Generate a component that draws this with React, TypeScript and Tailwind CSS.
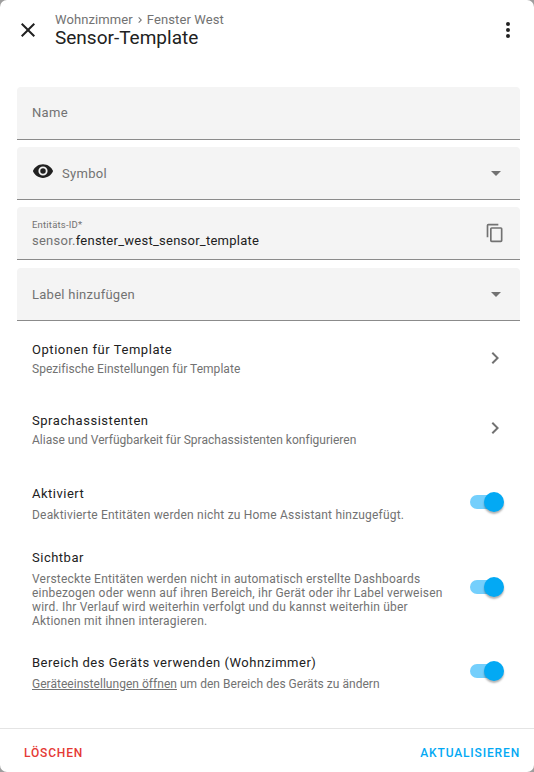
import React from 'react';

const Icon: React.FC<{ d: string; className?: string }> = ({ d, className }) => (
  <svg viewBox="0 0 24 24" className={className} fill="currentColor"><path d={d} /></svg>
);

const mdiClose = 'M19,6.41L17.59,5L12,10.59L6.41,5L5,6.41L10.59,12L5,17.59L6.41,19L12,13.41L17.59,19L19,17.59L13.41,12L19,6.41Z';
const mdiDots = 'M12,16A2,2 0 0,1 14,18A2,2 0 0,1 12,20A2,2 0 0,1 10,18A2,2 0 0,1 12,16M12,10A2,2 0 0,1 14,12A2,2 0 0,1 12,14A2,2 0 0,1 10,12A2,2 0 0,1 12,10M12,4A2,2 0 0,1 14,6A2,2 0 0,1 12,8A2,2 0 0,1 10,6A2,2 0 0,1 12,4Z';
const mdiEye = 'M12,9A3,3 0 0,0 9,12A3,3 0 0,0 12,15A3,3 0 0,0 15,12A3,3 0 0,0 12,9M12,17A5,5 0 0,1 7,12A5,5 0 0,1 12,7A5,5 0 0,1 17,12A5,5 0 0,1 12,17M12,4.5C7,4.5 2.73,7.61 1,12C2.73,16.39 7,19.5 12,19.5C17,19.5 21.27,16.39 23,12C21.27,7.61 17,4.5 12,4.5Z';
const mdiMenuDown = 'M7,10L12,15L17,10H7Z';
const mdiCopy = 'M19,21H8V7H19M19,5H8A2,2 0 0,0 6,7V21A2,2 0 0,0 8,23H19A2,2 0 0,0 21,21V7A2,2 0 0,0 19,5M16,1H4A2,2 0 0,0 2,3V17H4V3H16V1Z';
const mdiChevron = 'M8.59,16.58L13.17,12L8.59,7.41L10,6L16,12L10,18L8.59,16.58Z';

const Field: React.FC<{ className?: string; children: React.ReactNode }> = ({ className = '', children }) => (
  <div className={`h-[53px] flex items-center bg-[#f4f4f4] rounded-t border-b border-[#8b8b8b] ${className}`}>{children}</div>
);

const NavRow: React.FC<{ title: string; sub: string; className?: string; subClass?: string; chevronClass?: string }> = ({
  title,
  sub,
  className = '',
  subClass = '',
  chevronClass = '',
}) => (
  <div className={`flex items-center pl-[15px] pr-[13px] ${className}`}>
    <div className="flex-1">
      <div className="text-[13px] leading-5 tracking-[0.55px] text-[#212121]">{title}</div>
      <div className={`text-[12px] leading-[18px] text-[#727272] ${subClass}`}>{sub}</div>
    </div>
    <Icon d={mdiChevron} className={`w-6 h-6 text-[#727272] ${chevronClass}`} />
  </div>
);

const Toggle: React.FC<{ className?: string }> = ({ className = '' }) => (
  <div className={`relative w-[34px] h-[14px] shrink-0 ${className}`}>
    <div className="absolute left-0 right-0 top-0 bottom-0 rounded-full bg-[#74cffc] w-[30px]" />
    <div className="absolute right-0 top-[-3px] w-5 h-5 rounded-full bg-[#03a9f4] shadow-[0_2px_2px_rgba(0,0,0,0.3)]" />
  </div>
);

const ToggleRow: React.FC<{ title: string; className?: string; toggleClass?: string; descClass?: string; children: React.ReactNode }> = ({
  title,
  className = '',
  toggleClass = '',
  descClass = 'tracking-[0.2px]',
  children,
}) => (
  <div className={`flex items-center pl-[15px] pr-[16px] ${className}`}>
    <div className="flex-1 pr-6">
      <div className="text-[13px] leading-5 tracking-[0.5px] text-[#212121]">{title}</div>
      <div className={`text-[12px] leading-[14px] mt-[4px] text-[#727272] ${descClass}`}>{children}</div>
    </div>
    <Toggle className={toggleClass} />
  </div>
);

export default function App() {
  return (
    <div className="w-[534px] h-[772px] bg-[#9e9e9e] font-['Roboto',sans-serif]">
      <div className="w-full h-full bg-white rounded-[7px] flex flex-col overflow-hidden">
        <header className="flex items-start h-[87px] shrink-0">
          <Icon d={mdiClose} className="w-6 h-6 text-[#212121] ml-4 mt-[18px]" />
          <div className="ml-[15px] mt-[12px] flex-1">
            <div className="flex items-center text-[13px] leading-4 text-[#727272] tracking-[0.1px]">
              Wohnzimmer
              <svg viewBox="0 0 24 24" className="w-3 h-3 mx-[1px]" fill="currentColor"><path d={mdiChevron} /></svg>
              Fenster West
            </div>
            <div className="text-[19px] leading-6 text-[#212121] -mt-[2px]">Sensor-Template</div>
          </div>
          <Icon d={mdiDots} className="w-6 h-6 text-[#212121] mt-[18px] mr-[14px]" />
        </header>

        <main className="flex-1 px-[17px] pr-[14px]">
          <Field className="pl-[15px]">
            <span className="text-[13px] tracking-[0.3px] text-[#727272]">Name</span>
          </Field>
          <Field className="mt-[7px] pl-[15px] pr-[12px]">
            <Icon d={mdiEye} className="w-[22px] h-[22px] text-[#212121] -mt-1" />
            <span className="ml-[8px] pt-[1px] text-[13px] tracking-[0.3px] text-[#727272] flex-1">Symbol</span>
            <Icon d={mdiMenuDown} className="w-6 h-6 text-[#727272]" />
          </Field>
          <Field className="mt-[7px] pl-[15px] pr-[12px]">
            <div className="flex-1 pt-[2px]">
              <div className="text-[9.5px] leading-3 tracking-[0.2px] text-[#727272]">Entitäts-ID*</div>
              <div className="text-[13px] leading-[18px] mt-[1px] tracking-[0.25px] text-[#212121]">
                <span className="text-[#727272]">sensor.</span>fenster_west_sensor_template
              </div>
            </div>
            <Icon d={mdiCopy} className="w-5 h-5 mr-[3px] text-[#727272]" />
          </Field>
          <Field className="mt-[8px] pl-[15px] pr-[12px]">
            <span className="pt-[1px] text-[13px] tracking-[0.26px] text-[#727272] flex-1">Label hinzufügen</span>
            <Icon d={mdiMenuDown} className="w-6 h-6 text-[#727272]" />
          </Field>

          <NavRow className="mt-[19px]" subClass="-mt-[0.5px] tracking-[0.04px]" chevronClass="-mt-[2px]" title="Optionen für Template" sub="Spezifische Einstellungen für Template" />
          <NavRow className="mt-[33px]" subClass="mt-[0.5px] tracking-[0.01px]" chevronClass="-mt-[4px]" title="Sprachassistenten" sub="Aliase und Verfügbarkeit für Sprachassistenten konfigurieren" />

          <ToggleRow className="mt-[35px]" toggleClass="-mt-[2px]" title="Aktiviert">
            Deaktivierte Entitäten werden nicht zu Home Assistant hinzugefügt.
          </ToggleRow>
          <ToggleRow className="mt-[26px]" toggleClass="-mt-[2px]" title="Sichtbar">
            Versteckte Entitäten werden nicht in automatisch erstellte Dashboards einbezogen oder wenn auf ihren Bereich, ihr Gerät oder ihr Label verweisen wird. Ihr Verlauf wird weiterhin verfolgt und du kannst weiterhin über Aktionen mit ihnen interagieren.
          </ToggleRow>
          <ToggleRow className="mt-[25px]" toggleClass="-mt-[2px]" descClass="tracking-[0.03px]" title="Bereich des Geräts verwenden (Wohnzimmer)">
            <span className="underline">Geräteeinstellungen öffnen</span> um den Bereich des Geräts zu ändern
          </ToggleRow>
        </main>

        <footer className="h-[44px] shrink-0 border-t border-[#e4e4e4] flex items-center justify-between pl-6 pr-[14px] pt-[5px] text-[12px] font-medium tracking-[0.85px]">
          <span className="text-[#e53935]">LÖSCHEN</span>
          <span className="text-[#03a9f4]">AKTUALISIEREN</span>
        </footer>
      </div>
    </div>
  );
}
